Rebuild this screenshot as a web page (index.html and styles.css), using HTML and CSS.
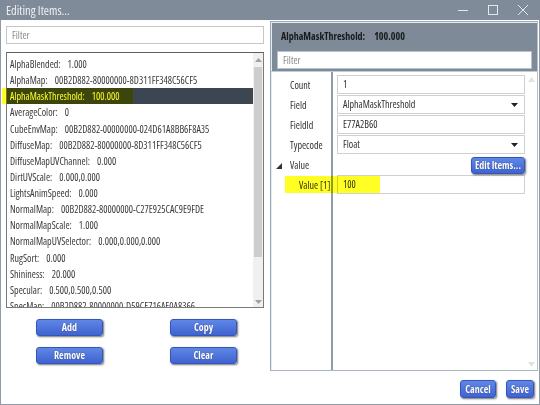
FILE: index.html
```html
<!DOCTYPE html>
<html>
<head>
<meta charset="utf-8">
<link rel="stylesheet" href="styles.css">
</head>
<body>
<div class="window">
  <div class="titlebar">
    <span class="title">Editing Items...</span>
    <div class="controls">
      <svg class="ctl" width="12" height="12" viewBox="0 0 12 12"><path d="M1 6.5h10" stroke="#e4e8ec" stroke-width="1"/></svg>
      <svg class="ctl" width="12" height="12" viewBox="0 0 12 12"><rect x="1.5" y="1.5" width="9" height="9" fill="none" stroke="#e4e8ec" stroke-width="1"/></svg>
      <svg class="ctl" width="12" height="12" viewBox="0 0 12 12"><path d="M1 1l10 10M11 1L1 11" stroke="#e4e8ec" stroke-width="1"/></svg>
    </div>
  </div>
  <div class="body">
    <div class="left">
      <div class="filter">Filter</div>
      <div class="listbox">
        <div class="items">
          <div class="item"><span class="k">AlphaBlended:</span><span class="v">1.000</span></div>
          <div class="item"><span class="k">AlphaMap:</span><span class="v">00B2D882-80000000-8D311FF348C56CF5</span></div>
          <div class="item sel"><span class="k">AlphaMaskThreshold:</span><span class="v">100.000</span></div>
          <div class="item"><span class="k">AverageColor:</span><span class="v">0</span></div>
          <div class="item"><span class="k">CubeEnvMap:</span><span class="v">00B2D882-00000000-024D61A8BB6F8A35</span></div>
          <div class="item"><span class="k">DiffuseMap:</span><span class="v">00B2D882-80000000-8D311FF348C56CF5</span></div>
          <div class="item"><span class="k">DiffuseMapUVChannel:</span><span class="v">0.000</span></div>
          <div class="item"><span class="k">DirtUVScale:</span><span class="v">0.000,0.000</span></div>
          <div class="item"><span class="k">LightsAnimSpeed:</span><span class="v">0.000</span></div>
          <div class="item"><span class="k">NormalMap:</span><span class="v">00B2D882-80000000-C27E925CAC9E9FDE</span></div>
          <div class="item"><span class="k">NormalMapScale:</span><span class="v">1.000</span></div>
          <div class="item"><span class="k">NormalMapUVSelector:</span><span class="v">0.000,0.000,0.000</span></div>
          <div class="item"><span class="k">RugSort:</span><span class="v">0.000</span></div>
          <div class="item"><span class="k">Shininess:</span><span class="v">20.000</span></div>
          <div class="item"><span class="k">Specular:</span><span class="v">0.500,0.500,0.500</span></div>
          <div class="item"><span class="k">SpecMap:</span><span class="v">00B2D882-80000000-D59CE716AE0A8366</span></div>
        </div>
        <div class="vscroll">
          <svg class="arr" width="9" height="6" viewBox="0 0 9 6"><path d="M1 5h7L4.5 1z" fill="#a0a0a0"/></svg>
          <div class="track"><div class="thumb"></div></div>
          <svg class="arr" width="9" height="6" viewBox="0 0 9 6"><path d="M1 1h7L4.5 5z" fill="#a0a0a0"/></svg>
        </div>
      </div>
      <div class="btngrid">
        <div class="btn">Add</div>
        <div class="btn">Copy</div>
        <div class="btn">Remove</div>
        <div class="btn">Clear</div>
      </div>
      <div class="mark mark-list"></div>
    </div>
    <div class="right">
      <div class="panel">
        <div class="header">
          <div class="htitle">AlphaMaskThreshold:<span class="hval">100.000</span></div>
          <div class="filter rfilter">Filter</div>
        </div>
        <div class="grid">
          <div class="labels">
            <div class="lab">Count</div>
            <div class="lab">Field</div>
            <div class="lab">FieldId</div>
            <div class="lab">Typecode</div>
            <div class="lab grp"><svg class="tri" width="6" height="6" viewBox="0 0 6 6"><path d="M6 0V6H0z" fill="#333"/></svg>Value</div>
            <div class="lab sub">Value [1]</div>
          </div>
          <div class="values">
            <div class="cell"><div class="box">1</div></div>
            <div class="cell"><div class="box combo">AlphaMaskThreshold<svg width="7" height="4" viewBox="0 0 7 4"><path d="M0 0h7L3.5 4z" fill="#222"/></svg></div></div>
            <div class="cell"><div class="box">E77A2B60</div></div>
            <div class="cell"><div class="box combo">Float<svg width="7" height="4" viewBox="0 0 7 4"><path d="M0 0h7L3.5 4z" fill="#222"/></svg></div></div>
            <div class="cell cellbtn"><div class="btn editbtn">Edit Items...</div></div>
            <div class="cell"><div class="box">100</div></div>
          </div>
          <div class="gscroll">
            <svg width="7" height="5" viewBox="0 0 7 5"><path d="M0 5h7L3.5 0z" fill="#e2e2e2"/></svg>
            <svg width="7" height="5" viewBox="0 0 7 5"><path d="M0 0h7L3.5 5z" fill="#e2e2e2"/></svg>
          </div>
          <div class="mark mark-grid"></div>
        </div>
      </div>
      <div class="footer">
        <div class="btn fbtn">Cancel</div>
        <div class="btn fbtn save">Save</div>
      </div>
    </div>
  </div>
</div>
</body>
</html>
```
FILE: styles.css
```css
* { box-sizing: border-box; }
html, body { margin: 0; padding: 0; }
body {
  width: 540px;
  height: 405px;
  overflow: hidden;
  font-family: "Open Sans", "Liberation Sans", sans-serif;
  font-stretch: 80%;
  font-size: 10px;
  color: #333;
  background: #fff;
}
.window {
  width: 540px;
  height: 405px;
  display: flex;
  flex-direction: column;
  border-left: 1px solid #8f9ba8;
  border-right: 1px solid #8f9ba8;
  border-bottom: 1px solid #8f9ba8;
  background: #fff;
}
.titlebar {
  height: 20px;
  flex: none;
  background: #7f8b99;
  display: flex;
  align-items: center;
  justify-content: space-between;
  margin: 0 -1px;
  padding-left: 6px;
}
.title {
  color: #eef1f4;
  font-size: 12.5px;
  font-stretch: 75%;
}
.controls { display: flex; gap: 18px; padding-right: 11px; }
.ctl { display: block; }
.body {
  flex: 1;
  display: flex;
  min-height: 0;
}
.left {
  width: 269px;
  flex: none;
  padding: 6px 0 0 5px;
  position: relative;
}
.filter {
  height: 18px;
  border: 1px solid #c6c6c6;
  color: #8a8a8a;
  padding-left: 5px;
  line-height: 16px;
  font-size: 10px;
  background: #fff;
}
.left .filter { width: 258px; }
.listbox {
  margin-top: 8px;
  width: 258px;
  height: 256px;
  border: 1px solid #6e6e6e;
  border-color: #5f5f5f #7a7a7a #7a7a7a #7a7a7a;
  display: flex;
  overflow: hidden;
}
.items { flex: 1; padding-top: 3px; overflow: hidden; }
.item {
  height: 16.13px;
  line-height: 16px;
  padding-left: 3px;
  white-space: nowrap;
  color: #3a3a3a;
}
.item .v { margin-left: 7px; }
.item.sel { background: #3c4650; color: #fff; }
.vscroll {
  width: 10px;
  flex: none;
  background: #f0f0f0;
  display: flex;
  flex-direction: column;
  align-items: center;
  padding: 4px 0 2px;
}
.arr { display: block; flex: none; }
.track { flex: 1; width: 100%; padding: 4px 1px; }
.thumb { width: 8px; height: 190px; background: #cdcdcd; margin: 0 auto; }
.btngrid {
  margin-top: 11px;
  padding-left: 30px;
  display: grid;
  grid-template-columns: 67px 67px;
  column-gap: 67px;
  row-gap: 11px;
}
.btn {
  height: 17px;
  border-radius: 3px;
  background: linear-gradient(#5f87e6, #3f63d0);
  border: 1px solid #3556b8;
  box-shadow: 1px 1px 2px rgba(0,0,0,0.55);
  color: #fff;
  font-weight: bold;
  font-size: 10px;
  text-align: center;
  line-height: 15px;
  white-space: nowrap;
  text-shadow: 0 0 1px rgba(0,0,40,0.6);
}
.mark {
  position: absolute;
  background: #ffff00;
  mix-blend-mode: multiply;
  opacity: 0.85;
}
.mark-list { left: 1px; top: 68px; width: 131px; height: 16px; }
.right {
  flex: 1;
  display: flex;
  flex-direction: column;
  min-width: 0;
}
.panel {
  margin-top: 1px;
  height: 350px;
  border: 1px solid #9aa8b7;
  border-right-color: #b5c0cb;
  border-bottom-color: #a9b5c1;
  box-shadow: inset 1px 1px 0 #e8ecf0;
  display: flex;
  flex-direction: column;
  margin-right: 1px;
}
.header {
  background: #7e8a98;
  margin: 1px 0 0 1px;
  padding: 5px 5px 2px 5px;
  flex: none;
}
.htitle {
  color: #17191c;
  font-weight: bold;
  font-size: 10px;
  line-height: 16px;
  padding-left: 4px;
}
.hval { margin-left: 9px; }
.rfilter { margin-top: 7px; border-color: #b8c2cc; }
.grid {
  flex: 1;
  display: flex;
  position: relative;
  border-top: 1px solid #c3ccd5;
}
.labels {
  width: 62px;
  flex: none;
  border-right: 2px solid #8f9cab;
  padding-top: 3px;
}
.lab {
  height: 20px;
  line-height: 20px;
  padding-left: 19px;
  color: #333;
  position: relative;
  white-space: nowrap;
}
.tri { position: absolute; left: 5px; top: 8px; }
.lab.sub { padding-left: 28px; }
.values {
  width: 192px;
  flex: none;
  padding: 3px 0 0 4px;
}
.cell { height: 20px; padding-bottom: 1px; }
.box {
  height: 19px;
  border: 1px solid #d0d0d0;
  line-height: 17px;
  padding-left: 5px;
  color: #333;
  white-space: nowrap;
}
.combo {
  display: flex;
  align-items: center;
  justify-content: space-between;
  padding-right: 6px;
}
.cellbtn { display: flex; justify-content: flex-end; padding-top: 2px; }
.editbtn { width: 54px; height: 17px; }
.gscroll {
  flex: 1;
  display: flex;
  flex-direction: column;
  justify-content: space-between;
  align-items: center;
  padding: 5px 0 3px;
}
.gscroll svg { display: block; }
.mark-grid { left: 14px; top: 104px; width: 95px; height: 17px; }
.footer {
  flex: 1;
  display: flex;
  justify-content: flex-end;
  align-items: flex-start;
  gap: 10px;
  padding: 9px 5px 0 0;
}
.fbtn { width: 36px; height: 18px; line-height: 16px; }
.fbtn.save { width: 28px; }
```
